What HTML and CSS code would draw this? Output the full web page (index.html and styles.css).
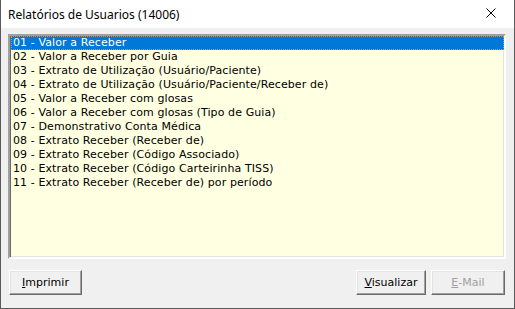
FILE: index.html
```html
<!DOCTYPE html>
<html lang="pt-BR">

<head>
    <meta charset="UTF-8">
    <meta name="viewport" content="width=device-width, initial-scale=1.0">
    <title>Relatórios de Usuarios</title>
    <link rel="stylesheet" href="styles.css">
</head>

<body>
    <div class="window">
        <div class="title-bar">
            <span class="title">Relatórios de Usuarios (14006)</span>
            <button class="close-btn" title="Fechar">
                <svg width="10" height="10" viewBox="0 0 10 10">
                    <path d="M0.5 0.5 L9.5 9.5 M9.5 0.5 L0.5 9.5" stroke="#000" stroke-width="1" fill="none" />
                </svg>
            </button>
        </div>
        <div class="content">
            <ul class="report-list">
                <li class="item selected">01 - Valor a Receber</li>
                <li class="item">02 - Valor a Receber por Guia</li>
                <li class="item">03 - Extrato de Utilização (Usuário/Paciente)</li>
                <li class="item">04 - Extrato de Utilização (Usuário/Paciente/Receber de)</li>
                <li class="item">05 - Valor a Receber com glosas</li>
                <li class="item">06 - Valor a Receber com glosas (Tipo de Guia)</li>
                <li class="item">07 - Demonstrativo Conta Médica</li>
                <li class="item">08 - Extrato Receber (Receber de)</li>
                <li class="item">09 - Extrato Receber (Código Associado)</li>
                <li class="item">10 - Extrato Receber (Código Carteirinha TISS)</li>
                <li class="item">11 - Extrato Receber (Receber de) por período</li>
            </ul>
            <div class="buttons">
                <button class="btn btn-print"><u>I</u>mprimir</button>
                <div class="spacer"></div>
                <button class="btn btn-view"><u>V</u>isualizar</button>
                <button class="btn btn-mail" disabled><u>E</u>-Mail</button>
            </div>
        </div>
    </div>
</body>

</html>
```

FILE: styles.css
```css
* {
    box-sizing: border-box;
}

body {
    margin: 0;
    background-color: #f0f0f0;
    font-family: Tahoma, "DejaVu Sans", sans-serif;
}

.window {
    display: flex;
    flex-direction: column;
    width: 515px;
    height: 309px;
    background-color: #f0f0f0;
    border: 1px solid #5a5a5a;
    border-top: none;
}

.title-bar {
    display: flex;
    align-items: center;
    justify-content: space-between;
    height: 28px;
    padding-left: 7px;
    background-color: #fff;
}

.title {
    font-family: "Noto Sans", sans-serif;
    font-size: 12px;
    color: #000;
}

.close-btn {
    display: flex;
    align-items: center;
    justify-content: center;
    width: 46px;
    height: 28px;
    padding: 0 0 2px 0;
    border: none;
    background: none;
}

.content {
    display: flex;
    flex-direction: column;
    flex: 1;
    padding: 6px 8px 0 7px;
}

.report-list {
    height: 225px;
    margin: 0;
    padding: 0 0 0 1px;
    list-style: none;
    background-color: #ffffe1;
    border: 2px solid;
    border-color: #a0a0a0 #fff #fff #a0a0a0;
    box-shadow: inset 1px 1px 0 #696969, inset -1px -1px 0 #e3e3e3;
}

.item {
    height: 14px;
    padding-left: 2px;
    font-size: 11px;
    line-height: 14px;
    letter-spacing: 0.1px;
    color: #000;
    white-space: nowrap;
}

.item.selected {
    background-color: #0078d7;
    color: #fff;
    outline: 1px dotted #f5892a;
    outline-offset: -1px;
}

.buttons {
    display: flex;
    gap: 5px;
    margin-top: 11px;
    padding: 0 1px;
}

.spacer {
    flex: 1;
}

.btn {
    height: 25px;
    padding: 0;
    font-family: Tahoma, "DejaVu Sans", sans-serif;
    font-size: 11px;
    color: #000;
    background-color: #f0f0f0;
    border: 1px solid;
    border-color: #fff #696969 #696969 #fff;
    box-shadow: inset -1px -1px 0 #a0a0a0, inset 1px 1px 0 #e3e3e3;
}

.btn-print {
    width: 73px;
}

.btn-view {
    width: 70px;
}

.btn-mail {
    width: 74px;
    color: #a0a0a0;
}
```
